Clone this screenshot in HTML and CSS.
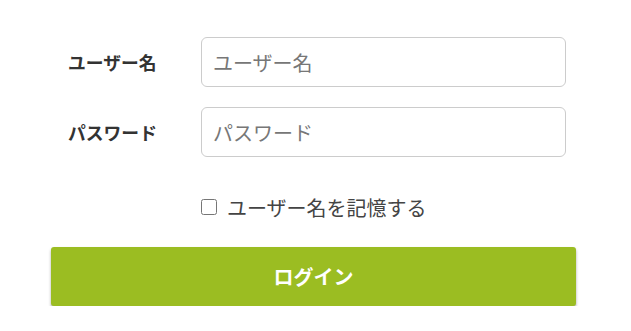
FILE: index.html
```html
<!DOCTYPE html>
<html lang="ja">
<head>
  <meta charset="UTF-8" />
  <title>ログイン</title>
  <link rel="stylesheet" href="styles.css">
</head>
<body>
  <form class="login-form">
    <div class="form-row">
      <label for="username">ユーザー名</label>
      <input type="text" id="username" placeholder="ユーザー名">
    </div>
    <div class="form-row">
      <label for="password">パスワード</label>
      <input type="password" id="password" placeholder="パスワード">
    </div>
    <div class="remember-row">
      <input type="checkbox" id="remember">
      <label for="remember">ユーザー名を記憶する</label>
    </div>
    <button type="button" class="login-btn">ログイン</button>
  </form>
</body>
</html>
```

FILE: styles.css
```css
html, body {
  margin: 0;
  padding: 0;
  background: #fff;
  font-family: 'Noto Sans CJK JP', 'Noto Sans', sans-serif;
  color: #333;
}
.login-form {
  width: 525px;
  padding: 37px 0 0 51px;
}
.form-row {
  display: flex;
  align-items: center;
  margin-bottom: 20px;
}
.form-row label {
  width: 133px;
  padding-left: 17px;
  font-size: 17.8px;
  font-weight: bold;
  color: #333;
}
.form-row input {
  box-sizing: border-box;
  width: 365px;
  height: 50px;
  padding: 0 11px;
  border: 1px solid #ccc;
  border-radius: 6px;
  font-family: inherit;
  font-size: 20px;
  color: #333;
  outline: none;
}
.form-row input::placeholder {
  color: #777;
}
.remember-row {
  display: flex;
  align-items: center;
  height: 30px;
  margin: 35px 0 0 150px;
}
.remember-row input {
  width: 16px;
  height: 16px;
  margin: 0 10px 0 0;
}
.remember-row label {
  font-size: 20px;
  color: #444;
}
.login-btn {
  display: block;
  width: 525px;
  height: 59px;
  margin-top: 25px;
  border: none;
  border-radius: 3px;
  background: #9bbd22;
  color: #fff;
  font-family: inherit;
  font-size: 20px;
  font-weight: bold;
  box-shadow: 0 2px 3px rgba(0, 0, 0, 0.35);
  cursor: pointer;
}
```
